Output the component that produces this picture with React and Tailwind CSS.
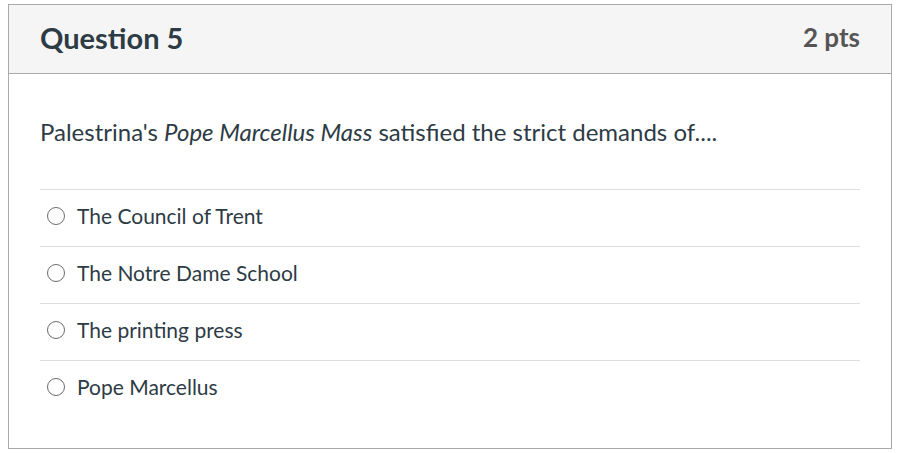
const answers = [
  'The Council of Trent',
  'The Notre Dame School',
  'The printing press',
  'Pope Marcellus',
];

export default function App() {
  return (
    <div className="bg-white pt-[4px] pl-[8px] h-[453px] font-['Lato','Noto_Sans',sans-serif] text-[#2d3b45]">
      <div className="w-[884px] border border-[#aaaaaa]">
        <div className="h-[69px] bg-[#f5f5f5] border-b border-[#aaaaaa] px-[31px] pb-[3px] flex items-center justify-between">
          <h2 className="text-[29px] font-bold">Question 5</h2>
          <span className="text-[26px] font-bold text-[#555555]">2 pts</span>
        </div>
        <div className="px-[31px] pt-[42px] pb-[31px]">
          <p className="text-[24px] leading-[32px] mb-[41px]">
            Palestrina's <em>Pope Marcellus Mass</em> satisfied the strict demands of....
          </p>
          <div>
            {answers.map((a) => (
              <label key={a} className="flex items-center h-[57px] border-t border-[#dddddd] pl-[7px] pb-[5px] gap-[12px]">
                <span className="w-[18px] h-[18px] rounded-full border border-[#6b6b6b] bg-white shrink-0" />
                <span className="text-[21px]">{a}</span>
              </label>
            ))}
          </div>
        </div>
      </div>
    </div>
  );
}
